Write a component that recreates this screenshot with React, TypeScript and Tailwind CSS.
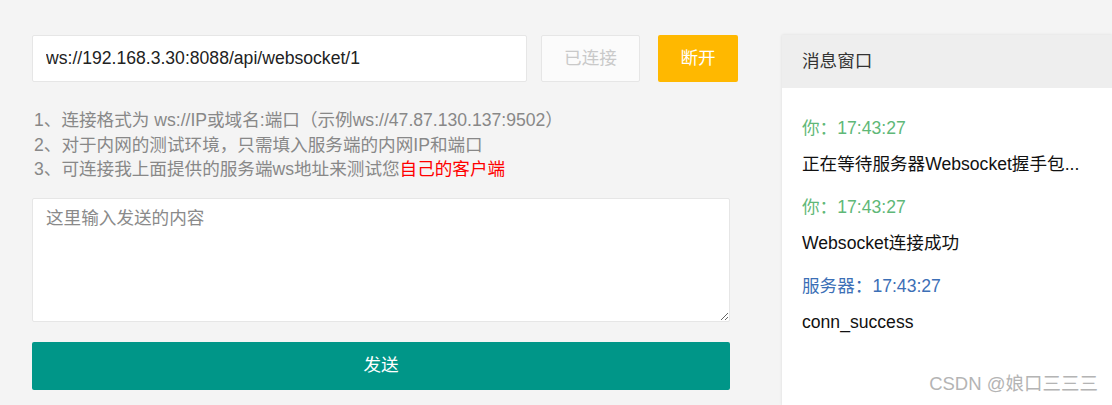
import { useState } from "react";

type Msg = { from: "me" | "server"; time: string; text: string };

const messages: Msg[] = [
  { from: "me", time: "17:43:27", text: "正在等待服务器Websocket握手包..." },
  { from: "me", time: "17:43:27", text: "Websocket连接成功" },
  { from: "server", time: "17:43:27", text: "conn_success" },
];

export default function App() {
  const [url, setUrl] = useState("ws://192.168.3.30:8088/api/websocket/1");
  const [content, setContent] = useState("");

  return (
    <div
      className="relative flex h-[405px] overflow-hidden bg-[#f4f4f4] pt-[35px] pl-[32px] text-[17.6px]"
      style={{ fontFamily: '"Liberation Sans", Arial, "Noto Sans CJK SC", sans-serif' }}
    >
      {/* Left column */}
      <div className="w-[706px] shrink-0">
        <div className="flex items-center">
          <input
            value={url}
            onChange={(e) => setUrl(e.target.value)}
            className="h-[47px] w-[495px] rounded-[2px] border border-[#e6e6e6] bg-white px-[13px] text-[17.6px] text-[#222] outline-none"
          />
          <button
            disabled
            className="ml-[14px] h-[47px] w-[99px] rounded-[2px] border border-[#e6e6e6] bg-[#fbfbfb] text-[17.6px] text-[#c9c9c9]"
          >
            已连接
          </button>
          <button className="ml-[18px] h-[47px] w-[80px] rounded-[2px] bg-[#ffb800] text-[17.6px] text-white">
            断开
          </button>
        </div>

        <div className="mt-[26px] pl-[2px] text-[17.6px] leading-[24.5px] text-[#888]">
          <p>1、连接格式为 ws://IP或域名:端口（示例ws://47.87.130.137:9502）</p>
          <p>2、对于内网的测试环境，只需填入服务端的内网IP和端口</p>
          <p>
            3、可连接我上面提供的服务端ws地址来测试您<span className="text-[#ff0000]">自己的客户端</span>
          </p>
        </div>

        <textarea
          value={content}
          onChange={(e) => setContent(e.target.value)}
          placeholder="这里输入发送的内容"
          className="mt-[16px] block h-[124px] w-[698px] rounded-[2px] border border-[#e6e6e6] bg-white px-[13px] py-[7px] text-[17.6px] leading-[24px] text-[#333] outline-none placeholder:text-[#8a8a8a]"
        />

        <button className="mt-[20px] h-[48px] w-[698px] rounded-[2px] bg-[#009688] text-[17.6px] text-white">
          发送
        </button>
      </div>

      {/* Message window */}
      <div className="ml-[44px] flex flex-1 flex-col bg-white shadow-[0_0_3px_rgba(0,0,0,0.1)]">
        <div className="flex h-[53px] items-center bg-[#eeeeee] pl-[20px] text-[17.6px] text-[#333]">
          消息窗口
        </div>
        <div className="flex flex-col gap-[19px] pl-[20px] pt-[28px]">
          {messages.map((m, i) => (
            <div key={i}>
              <div
                className={
                  m.from === "me"
                    ? "leading-[24px] text-[#5fb878]"
                    : "leading-[24px] text-[#3c6fb6]"
                }
              >
                {m.from === "me" ? "你" : "服务器"}：{m.time}
              </div>
              <div className="mt-[12px] leading-[24px] text-[#111]">{m.text}</div>
            </div>
          ))}
        </div>
      </div>

      {/* watermark */}
      <div className="absolute bottom-[7px] right-[14px] text-[18.5px] text-[#b4b4b4]">
        CSDN @娘口三三三
      </div>
    </div>
  );
}
